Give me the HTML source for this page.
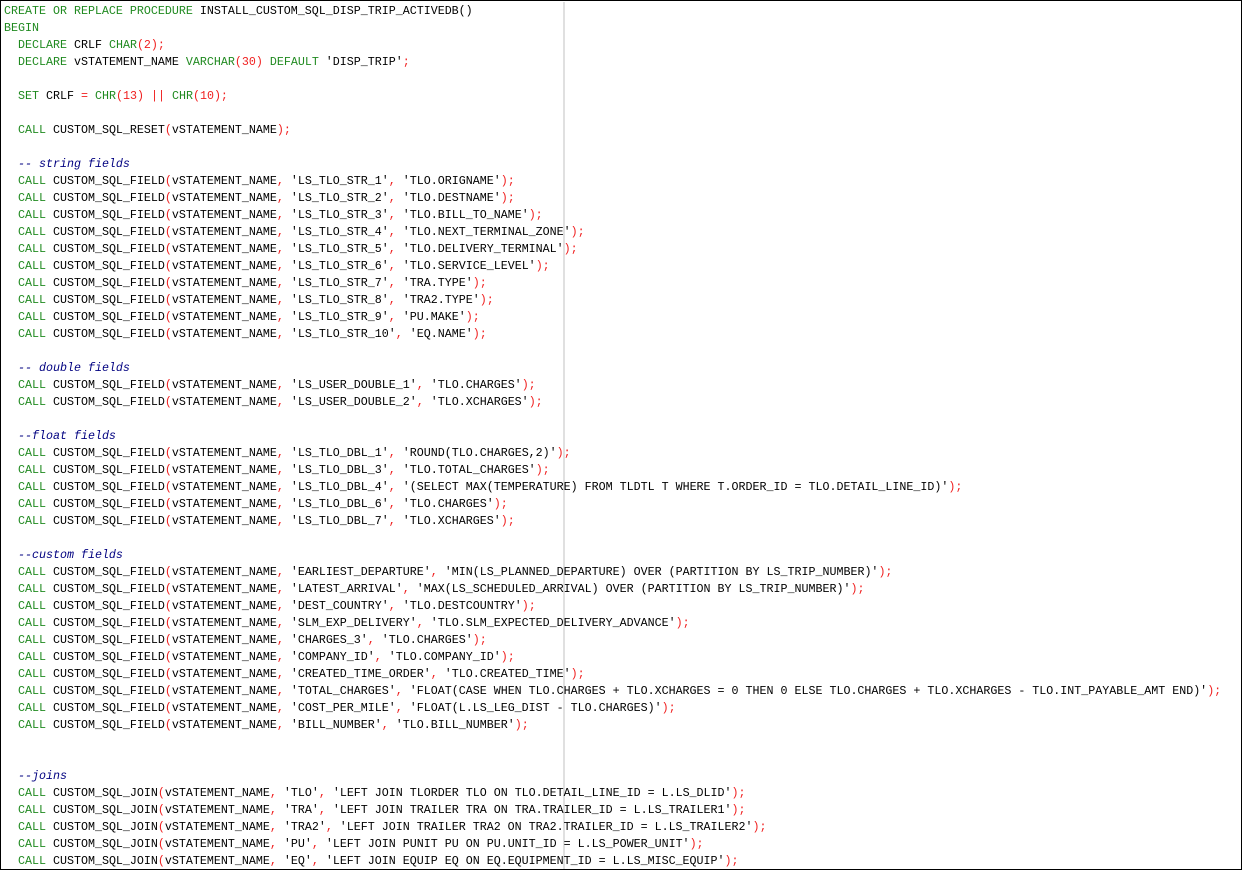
<!DOCTYPE html>
<html><head><meta charset="utf-8"><style>
html,body{margin:0;padding:0;background:#fff;}
#w{position:relative;width:1240px;height:868px;border:1px solid #000;overflow:hidden;background:#fff;}
#g{position:absolute;left:562px;top:1px;width:2px;height:868px;background:#e0e0e0;}
pre{position:absolute;left:3px;top:2px;margin:0;font-family:"Liberation Mono",monospace;font-size:11.67px;line-height:17px;color:#000;white-space:pre;}
.k{color:#208a20}.p{color:#f02020}.c{color:#000080;font-style:italic}
</style></head><body><div id="w"><div id="g"></div><pre><span class="k">CREATE OR REPLACE PROCEDURE</span> INSTALL_CUSTOM_SQL_DISP_TRIP_ACTIVEDB()
<span class="k">BEGIN</span>
  <span class="k">DECLARE</span> CRLF <span class="k">CHAR</span><span class="p">(2);</span>
  <span class="k">DECLARE</span> vSTATEMENT_NAME <span class="k">VARCHAR</span><span class="p">(30)</span> <span class="k">DEFAULT</span> 'DISP_TRIP'<span class="p">;</span>

  <span class="k">SET</span> CRLF <span class="p">=</span> <span class="k">CHR</span><span class="p">(13) ||</span> <span class="k">CHR</span><span class="p">(10);</span>

  <span class="k">CALL</span> CUSTOM_SQL_RESET<span class="p">(</span>vSTATEMENT_NAME<span class="p">);</span>

  <span class="c">-- string fields</span>
  <span class="k">CALL</span> CUSTOM_SQL_FIELD<span class="p">(</span>vSTATEMENT_NAME<span class="p">,</span> 'LS_TLO_STR_1'<span class="p">,</span> 'TLO.ORIGNAME'<span class="p">);</span>
  <span class="k">CALL</span> CUSTOM_SQL_FIELD<span class="p">(</span>vSTATEMENT_NAME<span class="p">,</span> 'LS_TLO_STR_2'<span class="p">,</span> 'TLO.DESTNAME'<span class="p">);</span>
  <span class="k">CALL</span> CUSTOM_SQL_FIELD<span class="p">(</span>vSTATEMENT_NAME<span class="p">,</span> 'LS_TLO_STR_3'<span class="p">,</span> 'TLO.BILL_TO_NAME'<span class="p">);</span>
  <span class="k">CALL</span> CUSTOM_SQL_FIELD<span class="p">(</span>vSTATEMENT_NAME<span class="p">,</span> 'LS_TLO_STR_4'<span class="p">,</span> 'TLO.NEXT_TERMINAL_ZONE'<span class="p">);</span>
  <span class="k">CALL</span> CUSTOM_SQL_FIELD<span class="p">(</span>vSTATEMENT_NAME<span class="p">,</span> 'LS_TLO_STR_5'<span class="p">,</span> 'TLO.DELIVERY_TERMINAL'<span class="p">);</span>
  <span class="k">CALL</span> CUSTOM_SQL_FIELD<span class="p">(</span>vSTATEMENT_NAME<span class="p">,</span> 'LS_TLO_STR_6'<span class="p">,</span> 'TLO.SERVICE_LEVEL'<span class="p">);</span>
  <span class="k">CALL</span> CUSTOM_SQL_FIELD<span class="p">(</span>vSTATEMENT_NAME<span class="p">,</span> 'LS_TLO_STR_7'<span class="p">,</span> 'TRA.TYPE'<span class="p">);</span>
  <span class="k">CALL</span> CUSTOM_SQL_FIELD<span class="p">(</span>vSTATEMENT_NAME<span class="p">,</span> 'LS_TLO_STR_8'<span class="p">,</span> 'TRA2.TYPE'<span class="p">);</span>
  <span class="k">CALL</span> CUSTOM_SQL_FIELD<span class="p">(</span>vSTATEMENT_NAME<span class="p">,</span> 'LS_TLO_STR_9'<span class="p">,</span> 'PU.MAKE'<span class="p">);</span>
  <span class="k">CALL</span> CUSTOM_SQL_FIELD<span class="p">(</span>vSTATEMENT_NAME<span class="p">,</span> 'LS_TLO_STR_10'<span class="p">,</span> 'EQ.NAME'<span class="p">);</span>

  <span class="c">-- double fields</span>
  <span class="k">CALL</span> CUSTOM_SQL_FIELD<span class="p">(</span>vSTATEMENT_NAME<span class="p">,</span> 'LS_USER_DOUBLE_1'<span class="p">,</span> 'TLO.CHARGES'<span class="p">);</span>
  <span class="k">CALL</span> CUSTOM_SQL_FIELD<span class="p">(</span>vSTATEMENT_NAME<span class="p">,</span> 'LS_USER_DOUBLE_2'<span class="p">,</span> 'TLO.XCHARGES'<span class="p">);</span>

  <span class="c">--float fields</span>
  <span class="k">CALL</span> CUSTOM_SQL_FIELD<span class="p">(</span>vSTATEMENT_NAME<span class="p">,</span> 'LS_TLO_DBL_1'<span class="p">,</span> 'ROUND(TLO.CHARGES,2)'<span class="p">);</span>
  <span class="k">CALL</span> CUSTOM_SQL_FIELD<span class="p">(</span>vSTATEMENT_NAME<span class="p">,</span> 'LS_TLO_DBL_3'<span class="p">,</span> 'TLO.TOTAL_CHARGES'<span class="p">);</span>
  <span class="k">CALL</span> CUSTOM_SQL_FIELD<span class="p">(</span>vSTATEMENT_NAME<span class="p">,</span> 'LS_TLO_DBL_4'<span class="p">,</span> '(SELECT MAX(TEMPERATURE) FROM TLDTL T WHERE T.ORDER_ID = TLO.DETAIL_LINE_ID)'<span class="p">);</span>
  <span class="k">CALL</span> CUSTOM_SQL_FIELD<span class="p">(</span>vSTATEMENT_NAME<span class="p">,</span> 'LS_TLO_DBL_6'<span class="p">,</span> 'TLO.CHARGES'<span class="p">);</span>
  <span class="k">CALL</span> CUSTOM_SQL_FIELD<span class="p">(</span>vSTATEMENT_NAME<span class="p">,</span> 'LS_TLO_DBL_7'<span class="p">,</span> 'TLO.XCHARGES'<span class="p">);</span>

  <span class="c">--custom fields</span>
  <span class="k">CALL</span> CUSTOM_SQL_FIELD<span class="p">(</span>vSTATEMENT_NAME<span class="p">,</span> 'EARLIEST_DEPARTURE'<span class="p">,</span> 'MIN(LS_PLANNED_DEPARTURE) OVER (PARTITION BY LS_TRIP_NUMBER)'<span class="p">);</span>
  <span class="k">CALL</span> CUSTOM_SQL_FIELD<span class="p">(</span>vSTATEMENT_NAME<span class="p">,</span> 'LATEST_ARRIVAL'<span class="p">,</span> 'MAX(LS_SCHEDULED_ARRIVAL) OVER (PARTITION BY LS_TRIP_NUMBER)'<span class="p">);</span>
  <span class="k">CALL</span> CUSTOM_SQL_FIELD<span class="p">(</span>vSTATEMENT_NAME<span class="p">,</span> 'DEST_COUNTRY'<span class="p">,</span> 'TLO.DESTCOUNTRY'<span class="p">);</span>
  <span class="k">CALL</span> CUSTOM_SQL_FIELD<span class="p">(</span>vSTATEMENT_NAME<span class="p">,</span> 'SLM_EXP_DELIVERY'<span class="p">,</span> 'TLO.SLM_EXPECTED_DELIVERY_ADVANCE'<span class="p">);</span>
  <span class="k">CALL</span> CUSTOM_SQL_FIELD<span class="p">(</span>vSTATEMENT_NAME<span class="p">,</span> 'CHARGES_3'<span class="p">,</span> 'TLO.CHARGES'<span class="p">);</span>
  <span class="k">CALL</span> CUSTOM_SQL_FIELD<span class="p">(</span>vSTATEMENT_NAME<span class="p">,</span> 'COMPANY_ID'<span class="p">,</span> 'TLO.COMPANY_ID'<span class="p">);</span>
  <span class="k">CALL</span> CUSTOM_SQL_FIELD<span class="p">(</span>vSTATEMENT_NAME<span class="p">,</span> 'CREATED_TIME_ORDER'<span class="p">,</span> 'TLO.CREATED_TIME'<span class="p">);</span>
  <span class="k">CALL</span> CUSTOM_SQL_FIELD<span class="p">(</span>vSTATEMENT_NAME<span class="p">,</span> 'TOTAL_CHARGES'<span class="p">,</span> 'FLOAT(CASE WHEN TLO.CHARGES + TLO.XCHARGES = 0 THEN 0 ELSE TLO.CHARGES + TLO.XCHARGES - TLO.INT_PAYABLE_AMT END)'<span class="p">);</span>
  <span class="k">CALL</span> CUSTOM_SQL_FIELD<span class="p">(</span>vSTATEMENT_NAME<span class="p">,</span> 'COST_PER_MILE'<span class="p">,</span> 'FLOAT(L.LS_LEG_DIST - TLO.CHARGES)'<span class="p">);</span>
  <span class="k">CALL</span> CUSTOM_SQL_FIELD<span class="p">(</span>vSTATEMENT_NAME<span class="p">,</span> 'BILL_NUMBER'<span class="p">,</span> 'TLO.BILL_NUMBER'<span class="p">);</span>


  <span class="c">--joins</span>
  <span class="k">CALL</span> CUSTOM_SQL_JOIN<span class="p">(</span>vSTATEMENT_NAME<span class="p">,</span> 'TLO'<span class="p">,</span> 'LEFT JOIN TLORDER TLO ON TLO.DETAIL_LINE_ID = L.LS_DLID'<span class="p">);</span>
  <span class="k">CALL</span> CUSTOM_SQL_JOIN<span class="p">(</span>vSTATEMENT_NAME<span class="p">,</span> 'TRA'<span class="p">,</span> 'LEFT JOIN TRAILER TRA ON TRA.TRAILER_ID = L.LS_TRAILER1'<span class="p">);</span>
  <span class="k">CALL</span> CUSTOM_SQL_JOIN<span class="p">(</span>vSTATEMENT_NAME<span class="p">,</span> 'TRA2'<span class="p">,</span> 'LEFT JOIN TRAILER TRA2 ON TRA2.TRAILER_ID = L.LS_TRAILER2'<span class="p">);</span>
  <span class="k">CALL</span> CUSTOM_SQL_JOIN<span class="p">(</span>vSTATEMENT_NAME<span class="p">,</span> 'PU'<span class="p">,</span> 'LEFT JOIN PUNIT PU ON PU.UNIT_ID = L.LS_POWER_UNIT'<span class="p">);</span>
  <span class="k">CALL</span> CUSTOM_SQL_JOIN<span class="p">(</span>vSTATEMENT_NAME<span class="p">,</span> 'EQ'<span class="p">,</span> 'LEFT JOIN EQUIP EQ ON EQ.EQUIPMENT_ID = L.LS_MISC_EQUIP'<span class="p">);</span>
</pre></div></body></html>
